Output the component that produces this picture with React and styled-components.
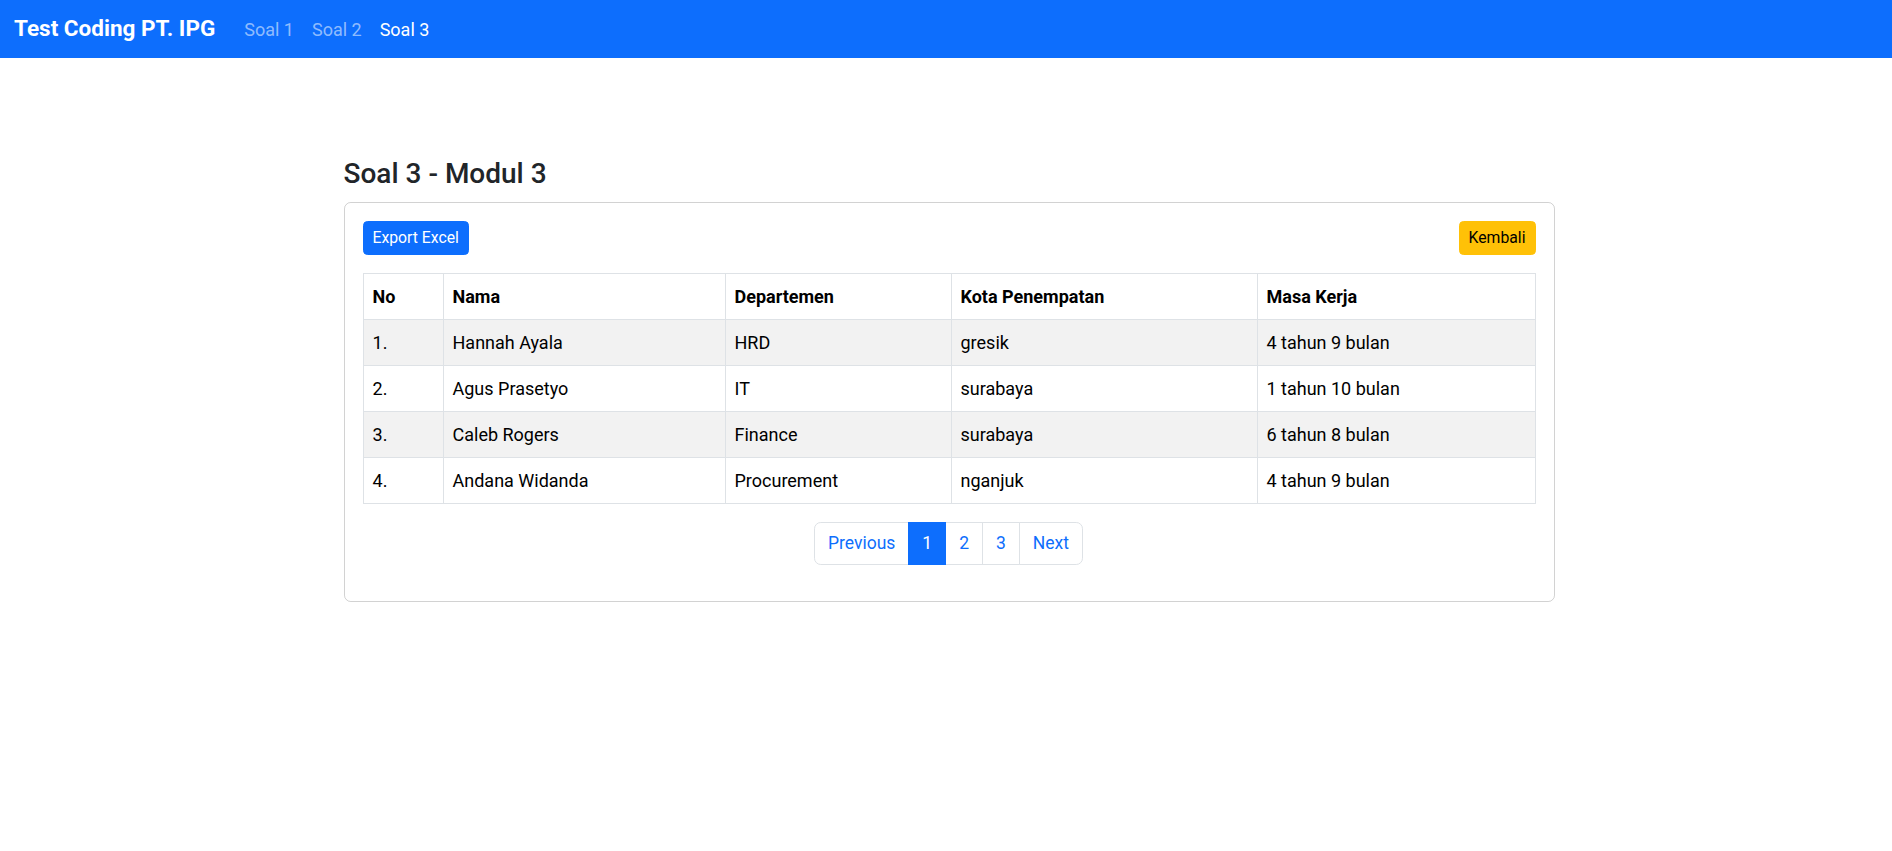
import React from "react";
import styled, { createGlobalStyle } from "styled-components";

const GlobalStyle = createGlobalStyle`
  * { box-sizing: border-box; }
  body {
    margin: 0;
    background: #fff;
    color: #212529;
    font-family: "Segoe UI", Roboto, "Liberation Sans", sans-serif;
    font-size: 18px;
    line-height: 1.5;
  }
`;

const Navbar = styled.nav`
  height: 58px;
  background: #0d6efd;
  display: flex;
  align-items: center;
  padding: 0 14px;
`;

const Brand = styled.a`
  color: #fff;
  font-size: 22.5px;
  font-weight: 700;
  margin-right: 20px;
  text-decoration: none;
`;

const NavLink = styled.a`
  color: ${({ active }) => (active ? "#fff" : "rgba(255, 255, 255, 0.55)")};
  font-size: 18px;
  padding: 0 9px;
  text-decoration: none;
`;

const Page = styled.main`
  padding: 97px 0 0 6px;
`;

const Wrapper = styled.div`
  width: 1211px;
  margin: 0 auto;
`;

const Title = styled.h3`
  margin: 0 0 9px;
  font-size: 28px;
  font-weight: 500;
  line-height: 1.35;
  color: #212529;
`;

const Card = styled.div`
  border: 1px solid rgba(0, 0, 0, 0.175);
  border-radius: 6.75px;
  padding: 18px;
`;

const Toolbar = styled.div`
  display: flex;
  justify-content: space-between;
  margin-bottom: 18px;
`;

const Button = styled.button`
  font-family: inherit;
  font-size: 15.75px;
  line-height: 1.5;
  padding: 4.5px 9px;
  border-radius: 4.5px;
  border: 1px solid ${({ variant }) => (variant === "warning" ? "#ffc107" : "#0d6efd")};
  background: ${({ variant }) => (variant === "warning" ? "#ffc107" : "#0d6efd")};
  color: ${({ variant }) => (variant === "warning" ? "#000" : "#fff")};
`;

const Table = styled.table`
  width: 100%;
  border-collapse: collapse;
  margin-bottom: 18px;
  color: #000;
`;

const Th = styled.th`
  text-align: left;
  font-weight: 700;
  padding: 9px;
  border: 1px solid #dee2e6;
  width: ${({ w }) => w};
`;

const Row = styled.tr`
  background: ${({ striped }) => (striped ? "#f2f2f2" : "#fff")};
`;

const Td = styled.td`
  padding: 9px;
  border: 1px solid #dee2e6;
`;

const Pagination = styled.ul`
  display: flex;
  justify-content: center;
  list-style: none;
  margin: 0 0 18px;
  padding: 0;
`;

const PageItem = styled.li`
  margin-left: -1px;
  &:first-child a { border-radius: 6.75px 0 0 6.75px; }
  &:last-child a { border-radius: 0 6.75px 6.75px 0; }
`;

const PageLink = styled.a`
  display: block;
  padding: 6.75px 13px;
  font-size: 17.5px;
  line-height: 27px;
  text-decoration: none;
  border: 1px solid ${({ active }) => (active ? "#0d6efd" : "#dee2e6")};
  background: ${({ active }) => (active ? "#0d6efd" : "#fff")};
  color: ${({ active }) => (active ? "#fff" : "#0d6efd")};
  position: relative;
  z-index: ${({ active }) => (active ? 1 : 0)};
`;

const employees = [
  { nama: "Hannah Ayala", dept: "HRD", kota: "gresik", masa: "4 tahun 9 bulan" },
  { nama: "Agus Prasetyo", dept: "IT", kota: "surabaya", masa: "1 tahun 10 bulan" },
  { nama: "Caleb Rogers", dept: "Finance", kota: "surabaya", masa: "6 tahun 8 bulan" },
  { nama: "Andana Widanda", dept: "Procurement", kota: "nganjuk", masa: "4 tahun 9 bulan" },
];

const columns = [
  { label: "No", w: "80px" },
  { label: "Nama", w: "282px" },
  { label: "Departemen", w: "226px" },
  { label: "Kota Penempatan", w: "306px" },
  { label: "Masa Kerja", w: "auto" },
];

const App = () => {
  return (
    <>
      <GlobalStyle />
      <Navbar>
        <Brand href="#">Test Coding PT. IPG</Brand>
        <NavLink href="#">Soal 1</NavLink>
        <NavLink href="#">Soal 2</NavLink>
        <NavLink href="#" active>
          Soal 3
        </NavLink>
      </Navbar>

      <Page>
        <Wrapper>
          <Title>Soal 3 - Modul 3</Title>
          <Card>
            <Toolbar>
              <Button>Export Excel</Button>
              <Button variant="warning">Kembali</Button>
            </Toolbar>

            <Table>
              <thead>
                <tr>
                  {columns.map((col) => (
                    <Th key={col.label} w={col.w}>
                      {col.label}
                    </Th>
                  ))}
                </tr>
              </thead>
              <tbody>
                {employees.map((emp, index) => (
                  <Row key={emp.nama} striped={index % 2 === 0}>
                    <Td>{index + 1}.</Td>
                    <Td>{emp.nama}</Td>
                    <Td>{emp.dept}</Td>
                    <Td>{emp.kota}</Td>
                    <Td>{emp.masa}</Td>
                  </Row>
                ))}
              </tbody>
            </Table>

            <Pagination>
              {["Previous", "1", "2", "3", "Next"].map((label) => (
                <PageItem key={label}>
                  <PageLink href="#" active={label === "1"}>
                    {label}
                  </PageLink>
                </PageItem>
              ))}
            </Pagination>
          </Card>
        </Wrapper>
      </Page>
    </>
  );
};

export default App;
